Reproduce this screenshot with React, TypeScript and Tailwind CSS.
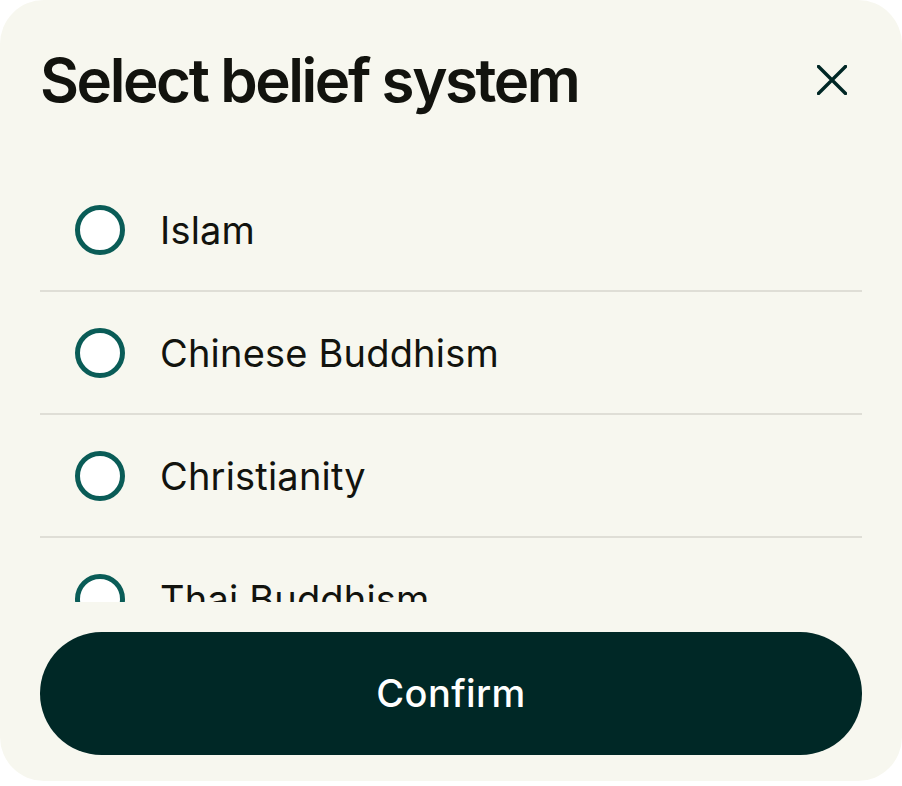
import { useState } from 'react';

const options = ['Islam', 'Chinese Buddhism', 'Christianity', 'Thai Buddhism', 'Hinduism'];

export default function App() {
  const [selected, setSelected] = useState<string | null>(null);

  return (
    <main className="min-h-screen bg-white font-['Inter',sans-serif]">
      <div className="flex h-[781px] w-[902px] flex-col rounded-[44px] bg-[#f7f7ef] px-10 pt-[44px]">
        <div className="flex h-[72px] items-center justify-between">
          <h1 className="text-[60px] font-semibold leading-none tracking-[-0.04em] text-[#12130e]">
            Select belief system
          </h1>
          <button className="mr-[15px] flex h-[30px] w-[30px] items-center justify-center text-[#002725]">
            <svg width="30" height="30" viewBox="0 0 30 30" fill="none">
              <path d="M1.5 1.5L28.5 28.5M28.5 1.5L1.5 28.5" stroke="currentColor" strokeWidth="3.4" strokeLinecap="square" />
            </svg>
          </button>
        </div>

        <ul className="mt-[53px] h-[433px] overflow-hidden">
          {options.map((option) => (
            <li key={option} className="h-[123px] border-b-2 border-[#dfded6]">
              <button
                onClick={() => setSelected(option)}
                className="flex h-full w-full items-center gap-[35px] pl-[35px] text-left"
              >
                <span className="flex h-[50px] w-[50px] shrink-0 items-center justify-center rounded-full border-[5px] border-[#0a5c57] bg-white">
                  {selected === option && <span className="h-[24px] w-[24px] rounded-full bg-[#0a5c57]" />}
                </span>
                <span className="text-[38px] leading-none tracking-[0.005em] text-[#12130e]">{option}</span>
              </button>
            </li>
          ))}
        </ul>

        <button className="mt-[30px] flex h-[123px] w-full items-center justify-center rounded-full bg-[#002826] text-[38px] font-medium tracking-[0.01em] text-white">
          Confirm
        </button>
      </div>
    </main>
  );
}
